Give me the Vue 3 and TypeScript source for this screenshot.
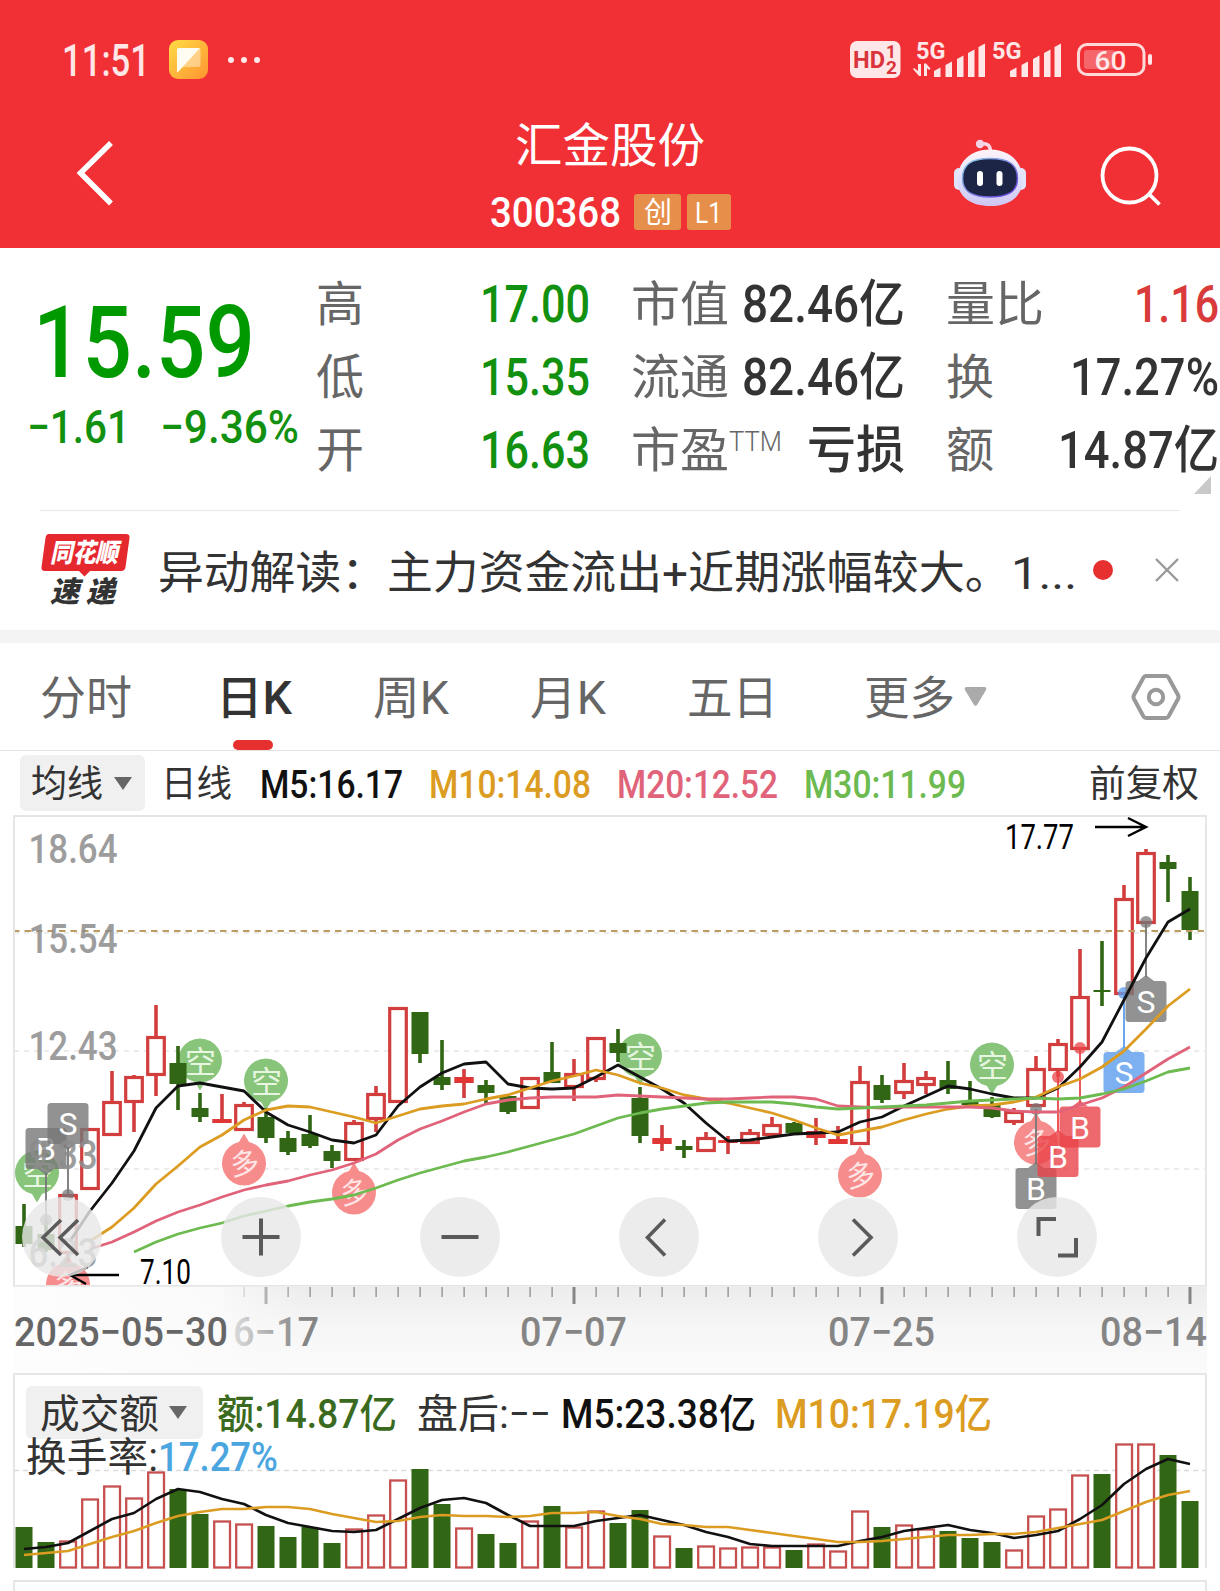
<script setup lang="ts">
import type { Directive } from 'vue'

/* Condenses an inline-block to a given layout width, like a DIN-style face. */
const vFit: Directive<HTMLElement, number> = {
  mounted(el, { value }) {
    const natural = el.getBoundingClientRect().width
    el.style.transform = `scaleX(${value / natural})`
    el.style.marginRight = `${value - natural}px`
  },
}

interface Stat { label: string; lw: number; value: string; vw: number; tone: string; sup?: string }
const columns: Stat[][] = [
  [
    { label: '高', lw: 48, value: '17.00', vw: 110, tone: 'down' },
    { label: '低', lw: 48, value: '15.35', vw: 110, tone: 'down' },
    { label: '开', lw: 48, value: '16.63', vw: 110, tone: 'down' },
  ],
  [
    { label: '市值', lw: 98, value: '82.46亿', vw: 163, tone: 'dark' },
    { label: '流通', lw: 98, value: '82.46亿', vw: 163, tone: 'dark' },
    { label: '市盈', lw: 98, value: '亏损', vw: 98, tone: 'dark', sup: 'TTM' },
  ],
  [
    { label: '量比', lw: 98, value: '1.16', vw: 85, tone: 'up' },
    { label: '换', lw: 48, value: '17.27%', vw: 149, tone: 'dark' },
    { label: '额', lw: 48, value: '14.87亿', vw: 161, tone: 'dark' },
  ],
]

const X0 = 24
const STEP = 22
const cx = (i: number) => X0 + STEP * i

/* kind, high, body top, body bottom, low */
type Candle = ['r' | 'g' | 'f', number, number, number, number]
const candles: Candle[] = [
  ['g', 1204, 1226, 1244, 1247], ['g', 1220, 1234, 1250, 1252], ['r', 1194, 1194, 1253, 1262], ['r', 1128, 1128, 1189, 1189],
  ['r', 1071, 1101, 1135, 1135], ['r', 1075, 1076, 1102, 1132], ['r', 1005, 1036, 1075, 1096], ['g', 1046, 1063, 1084, 1110],
  ['g', 1093, 1108, 1117, 1122], ['f', 1094, 1119, 1123, 1123], ['r', 1102, 1104, 1130, 1131], ['g', 1108, 1117, 1138, 1143],
  ['g', 1131, 1138, 1152, 1155], ['g', 1115, 1134, 1146, 1148], ['g', 1145, 1151, 1161, 1168], ['r', 1120, 1122, 1160, 1160],
  ['r', 1086, 1093, 1119, 1132], ['r', 1007, 1007, 1102, 1102], ['g', 1012, 1012, 1054, 1063], ['g', 1040, 1077, 1085, 1090],
  ['f', 1069, 1077, 1083, 1098], ['g', 1080, 1085, 1093, 1104], ['g', 1096, 1096, 1112, 1114], ['r', 1077, 1077, 1108, 1109],
  ['g', 1042, 1072, 1083, 1083], ['r', 1059, 1073, 1087, 1101], ['r', 1037, 1037, 1079, 1082], ['g', 1029, 1043, 1053, 1062],
  ['g', 1087, 1098, 1136, 1143], ['f', 1125, 1138, 1144, 1151], ['g', 1140, 1146, 1150, 1158], ['r', 1132, 1137, 1151, 1152],
  ['f', 1136, 1140, 1143, 1154], ['r', 1129, 1132, 1143, 1143], ['r', 1117, 1124, 1135, 1137], ['g', 1122, 1123, 1133, 1133],
  ['f', 1118, 1131, 1138, 1145], ['f', 1126, 1139, 1144, 1144], ['r', 1066, 1081, 1144, 1144], ['g', 1075, 1085, 1100, 1103],
  ['r', 1063, 1080, 1093, 1099], ['r', 1071, 1077, 1085, 1094], ['g', 1061, 1080, 1089, 1094], ['g', 1081, 1102, 1105, 1105],
  ['g', 1097, 1105, 1117, 1118], ['r', 1108, 1111, 1122, 1125], ['r', 1056, 1068, 1106, 1106], ['r', 1039, 1043, 1070, 1077],
  ['r', 949, 996, 1049, 1049], ['g', 941, 990, 992, 1006], ['r', 885, 898, 994, 994], ['r', 849, 852, 923, 923],
  ['g', 855, 862, 869, 902], ['g', 877, 891, 930, 940],
]

const line = (start: number, ys: number[]) => ys.map((y, k) => `${cx(start + k)},${y}`).join(' ')

const ma5 = '70,1241 ' + line(3, [1211, 1183, 1151, 1108, 1086, 1083, 1087, 1091, 1112, 1125, 1132, 1140, 1143, 1135, 1106, 1087, 1073, 1064, 1062, 1084, 1088, 1089, 1088, 1077, 1065, 1077, 1089, 1103, 1123, 1141, 1140, 1137, 1134, 1133, 1132, 1122, 1117, 1106, 1096, 1086, 1089, 1094, 1098, 1098, 1088, 1067, 1042, 1000, 958, 922, 909])
const ma10 = line(3, [1241, 1227, 1208, 1184, 1166, 1147, 1135, 1120, 1110, 1106, 1107, 1112, 1117, 1123, 1116, 1109, 1106, 1104, 1099, 1095, 1088, 1081, 1076, 1070, 1075, 1083, 1088, 1095, 1099, 1103, 1108, 1113, 1120, 1128, 1135, 1131, 1127, 1120, 1114, 1109, 1106, 1105, 1102, 1097, 1087, 1079, 1067, 1051, 1029, 1006, 989])
const ma20 = line(3, [1249, 1242, 1232, 1221, 1212, 1205, 1197, 1190, 1185, 1181, 1175, 1170, 1163, 1154, 1140, 1129, 1121, 1112, 1104, 1100, 1098, 1097, 1097, 1097, 1095, 1096, 1097, 1098, 1099, 1099, 1098, 1097, 1097, 1099, 1106, 1107, 1108, 1107, 1107, 1107, 1107, 1108, 1111, 1112, 1112, 1105, 1098, 1087, 1073, 1059, 1047])
const ma30 = line(5, [1252, 1242, 1234, 1228, 1223, 1216, 1211, 1206, 1202, 1199, 1195, 1188, 1180, 1173, 1167, 1161, 1157, 1152, 1146, 1140, 1134, 1126, 1118, 1113, 1109, 1106, 1103, 1102, 1102, 1102, 1104, 1107, 1109, 1108, 1107, 1106, 1105, 1103, 1101, 1100, 1099, 1098, 1099, 1098, 1094, 1089, 1081, 1072, 1068])

const shorts = [[37, 1173], [200, 1061], [266, 1081], [640, 1056], [992, 1065]]
const longs = [[68, 1284], [244, 1163], [354, 1192], [860, 1175], [1036, 1142]]

/* centre x, box top, letter, colour, entry-dot y, whether the tip points up */
const trades = [
  { x: 46, y: 1128, t: 'B', c: '#777', dot: 1220, up: false },
  { x: 68, y: 1103, t: 'S', c: '#777', dot: 1195, up: false },
  { x: 1036, y: 1168, t: 'B', c: '#777', dot: 1109, up: true },
  { x: 1058, y: 1136, t: 'B', c: '#ea4448', dot: 1077, up: true },
  { x: 1080, y: 1106.5, t: 'B', c: '#ea4448', dot: 1048, up: true },
  { x: 1124, y: 1052, t: 'S', c: '#5b9cec', dot: 993, up: true },
  { x: 1146, y: 981, t: 'S', c: '#777', dot: 922, up: true },
]

const priceLabels = [
  { t: '18.64', y: 863, w: 89 }, { t: '15.54', y: 953, w: 89 }, { t: '12.43', y: 1060, w: 89 },
  { t: '9.33', y: 1169, w: 69 }, { t: '6.23', y: 1267, w: 69 },
]
const dates = [
  { x: 520, t: '07−07' }, { x: 828, t: '07−25' }, { x: 1100, t: '08−14' },
]
const ticks = Array.from({ length: 44 }, (_, k) => ({ x: 244 + STEP * k, big: (k - 1) % 14 === 0 }))

const volTops: [string, number][] = [
  ['g', 1527], ['g', 1542], ['r', 1541], ['r', 1499], ['r', 1486], ['r', 1498], ['r', 1472], ['g', 1489], ['g', 1514], ['r', 1521], ['r', 1524],
  ['g', 1526], ['g', 1537], ['g', 1527], ['g', 1543], ['r', 1529], ['r', 1515], ['r', 1480], ['g', 1469], ['g', 1504], ['r', 1528], ['g', 1534],
  ['g', 1543], ['r', 1521], ['g', 1506], ['r', 1527], ['r', 1511], ['g', 1523], ['g', 1510], ['r', 1536], ['g', 1548], ['r', 1546], ['r', 1548],
  ['r', 1547], ['r', 1547], ['g', 1550], ['r', 1544], ['r', 1551], ['r', 1511], ['g', 1527], ['r', 1525], ['r', 1529], ['g', 1531], ['g', 1538],
  ['g', 1542], ['r', 1550], ['r', 1516], ['r', 1509], ['r', 1475], ['g', 1474], ['r', 1444], ['r', 1444], ['g', 1455], ['g', 1501],
]
const vma5 = line(0, [1549, 1547, 1543, 1531, 1519, 1513, 1499, 1489, 1492, 1499, 1504, 1515, 1523, 1527, 1531, 1532, 1530, 1519, 1508, 1500, 1498, 1503, 1515, 1526, 1526, 1526, 1521, 1518, 1515, 1520, 1525, 1532, 1537, 1544, 1546, 1546, 1546, 1546, 1541, 1537, 1531, 1528, 1525, 1530, 1533, 1538, 1535, 1531, 1519, 1505, 1484, 1469, 1459, 1464])
const vma10 = line(0, [1555, 1553, 1551, 1544, 1537, 1531, 1523, 1516, 1512, 1509, 1509, 1507, 1507, 1509, 1514, 1518, 1522, 1521, 1517, 1515, 1516, 1516, 1517, 1516, 1513, 1513, 1512, 1516, 1519, 1524, 1525, 1527, 1527, 1530, 1533, 1536, 1539, 1542, 1542, 1541, 1539, 1537, 1535, 1535, 1534, 1534, 1532, 1528, 1524, 1520, 1511, 1502, 1495, 1491])

const signal = [[0, 68], [11.5, 62], [23, 56], [34, 50], [44.5, 44]]
</script>

<template>
  <div class="screen">
    <header>
      <div class="status">
        <span class="clock" v-fit="88">11:51</span>
        <svg class="app" width="39" height="39" viewBox="0 0 39 39">
          <defs>
            <linearGradient id="appbg" x1="0" y1="0" x2="1" y2="1"><stop offset="0" stop-color="#ffdc45" /><stop offset="1" stop-color="#ff9430" /></linearGradient>
          </defs>
          <rect width="39" height="39" rx="9" fill="url(#appbg)" />
          <rect x="8" y="8" width="23.5" height="19" rx="2" fill="#fff" opacity=".4" />
          <path d="M8 10q0-2 2-2h21L9.500 31.500Q8 33 8 31z" fill="#fffdf2" />
        </svg>
        <svg class="dots" width="34" height="8" viewBox="0 0 34 8" fill="#ffe9e9"><circle cx="4" cy="4" r="3" /><circle cx="17" cy="4" r="3" /><circle cx="30" cy="4" r="3" /></svg>
        <svg class="system" width="306" height="50" viewBox="848 35 306 50" font-family="Roboto" font-weight="700">
          <rect x="850" y="41" width="50.500" height="37" rx="7" fill="#ffe6e7" />
          <g fill="#d9343c">
            <text x="853" y="67.500" font-size="23" textLength="32" lengthAdjust="spacingAndGlyphs">HD</text>
            <text x="886" y="58" font-size="18" textLength="10" lengthAdjust="spacingAndGlyphs">1</text>
            <text x="886" y="73.500" font-size="18" textLength="11" lengthAdjust="spacingAndGlyphs">2</text>
          </g>
          <g fill="#ffe6e7">
            <text x="916" y="58.500" font-size="23" textLength="29.500" lengthAdjust="spacingAndGlyphs">5G</text>
            <text x="992" y="58.500" font-size="23" textLength="29.500" lengthAdjust="spacingAndGlyphs">5G</text>
            <path d="M918 64h3v12h-2l-6-7 1-1 4 3zM924 76h3v-8l2 2 1.500-1.500L926 63.500h-2z" />
            <template v-for="ox in [934, 1010]" :key="ox">
              <path v-for="s in signal" :key="s[0]" :d="`M${ox + s[0]} 77V${s[1] + 3}l6.500-3.500V77z`" />
            </template>
            <rect x="1148" y="54" width="4" height="11" rx="2" />
            <rect x="1084" y="50" width="31" height="19" rx="3" opacity=".3" />
            <text x="1094.500" y="69.500" font-size="26" font-weight="500" textLength="32" lengthAdjust="spacingAndGlyphs">60</text>
          </g>
          <rect x="1078.500" y="44.500" width="65.500" height="30" rx="8.500" fill="none" stroke="#ffd9da" stroke-width="3" />
        </svg>
      </div>
      <div class="nav">
        <svg class="back" width="40" height="68" viewBox="74 139 40 68" fill="none" stroke="#fff" stroke-width="5.500"><path d="M111 143L80.500 173l30.500 30.500" /></svg>
        <div class="title">
          <div class="name"><span v-fit="190">汇金股份</span></div>
          <div class="code"><span class="num" v-fit="131">300368</span><b class="b1"><span v-fit="28">创</span></b><b class="b2"><span v-fit="27">L1</span></b></div>
        </div>
        <svg class="robot" width="76" height="70" viewBox="952 138 76 70">
          <defs>
            <linearGradient id="shell" x1="0" y1="0" x2="0" y2="1"><stop offset="0" stop-color="#fff3f8" /><stop offset=".5" stop-color="#dfe2ff" /><stop offset="1" stop-color="#cfc6f2" /></linearGradient>
            <linearGradient id="rim" x1="0" y1="0" x2="1" y2="1"><stop offset="0" stop-color="#8fd0e8" /><stop offset="1" stop-color="#6a3be0" /></linearGradient>
          </defs>
          <path d="M980 144q10-2 10.500 7" fill="none" stroke="#ffd6e2" stroke-width="3.500" />
          <circle cx="980" cy="144" r="4.200" fill="#f3d3e6" />
          <rect x="954" y="168" width="10" height="22" rx="5" fill="#e2e4fa" /><rect x="1016" y="168" width="10" height="22" rx="5" fill="#e2e4fa" />
          <path d="M990 149.500c20 0 32.500 13 32.500 30 0 18-14 26.500-32.500 26.500s-32.500-8.500-32.500-26.500c0-17 12.500-30 32.500-30z" fill="url(#shell)" />
          <path d="M990 158.500c19 0 27.500 6 27.500 20 0 13-9 18.500-27.500 18.500s-27.500-5.500-27.500-18.500c0-14 8.500-20 27.500-20z" fill="#1d2547" stroke="url(#rim)" stroke-width="1.500" />
          <rect x="977" y="171" width="6" height="15" rx="3" fill="#fff" /><rect x="996.500" y="171" width="6" height="15" rx="3" fill="#fff" />
        </svg>
        <svg class="search" width="64" height="64" viewBox="1099 143 64 64" fill="none" stroke="#fff" stroke-width="3.800"><circle cx="1129.500" cy="174.500" r="27" /><path d="M1148.500 192.500l11 11" /></svg>
      </div>
    </header>

    <section class="quote">
      <div class="price">
        <div class="last"><span v-fit="222">15.59</span></div>
        <div class="chg"><span v-fit="103">−1.61</span><span v-fit="139">−9.36%</span></div>
      </div>
      <div v-for="(col, c) in columns" :key="c" class="col">
        <div v-for="s in col" :key="s.label" class="stat">
          <span class="lab" v-fit="s.lw">{{ s.label }}</span>
          <sup v-if="s.sup" v-fit="53">{{ s.sup }}</sup>
          <span class="val" :class="s.tone" v-fit="s.vw">{{ s.value }}</span>
        </div>
      </div>
      <svg class="corner" width="17" height="18" viewBox="0 0 17 18"><path d="M17 0v18H0z" fill="#c9c9c9" /></svg>
    </section>

    <section class="news">
      <div class="logo">
        <svg width="90" height="44" viewBox="0 0 90 44"><path d="M8 0h77q4 0 3.500 4l-4 29q-.5 4-4.500 4H49l-5.500 5.500L38 37H4q-4 0-3.500-4l4-29Q5 0 8 0z" fill="#e5282e" /></svg>
        <strong class="l1"><span v-fit="68">同花顺</span></strong>
        <strong class="l2"><span v-fit="65">速 递</span></strong>
      </div>
      <p><span v-fit="229">异动解读：</span><span v-fit="275">主力资金流出</span><span v-fit="26">+</span><span v-fit="323">近期涨幅较大。</span><span v-fit="66">1...</span></p>
      <em></em>
      <svg class="close" width="26" height="26" viewBox="0 0 26 26" fill="none" stroke="#999" stroke-width="2.400"><path d="M2 2l22 22M24 2L2 24" /></svg>
    </section>

    <nav class="tabs">
      <a class="t1"><span v-fit="92">分时</span></a>
      <a class="t2 on"><span v-fit="76">日K</span></a>
      <a class="t3"><span v-fit="76">周K</span></a>
      <a class="t4"><span v-fit="76">月K</span></a>
      <a class="t5"><span v-fit="91">五日</span></a>
      <a class="t6"><span v-fit="91">更多</span><svg class="more" width="23" height="19" viewBox="0 0 23 19"><path d="M2 0h19q2 1 1 3l-9 15q-1.500 1.500-3 0L1 3Q0 1 2 0z" fill="#aaa" /></svg></a>
      <svg class="hex" width="50" height="50" viewBox="0 0 50 50" fill="none" stroke="#999" stroke-width="4"><path d="M15 4h20q1.500 0 2.500 1.500l9.500 17.500q1 2 0 4L37.500 44.500q-1 1.500-2.500 1.500H15q-1.500 0-2.500-1.500L3 27q-1-2 0-4l9.500-17.500Q13.500 4 15 4z" /><circle cx="25" cy="25" r="7.200" /></svg>
    </nav>

    <div class="legend">
      <div class="pill p1"><span v-fit="72">均线</span><svg width="18" height="13" viewBox="0 0 18 13"><path d="M0 0h18L9 13z" fill="#666" /></svg></div>
      <span class="k0" v-fit="71">日线</span>
      <span class="num k1" v-fit="143">M5:16.17</span>
      <span class="num k2" v-fit="162">M10:14.08</span>
      <span class="num k3" v-fit="161">M20:12.52</span>
      <span class="num k4" v-fit="162">M30:11.99</span>
      <span class="k5" v-fit="110">前复权</span>
    </div>

    <svg class="chart" width="1220" height="558" viewBox="0 815 1220 558">
      <defs>
        <linearGradient id="axis" x1="0" y1="0" x2="0" y2="1"><stop offset="0" stop-color="#ececec" /><stop offset=".45" stop-color="#f6f6f6" /><stop offset="1" stop-color="#fbfbfb" /></linearGradient>
        <linearGradient id="veil" x1="0" y1="0" x2="1" y2="0"><stop offset="0" stop-color="#fdfdfd" /><stop offset=".7" stop-color="#fbfbfb" stop-opacity=".9" /><stop offset="1" stop-color="#f8f8f8" stop-opacity="0" /></linearGradient>
        <clipPath id="plot"><rect x="14" y="816" width="1192" height="471" /></clipPath>
      </defs>
      <path d="M14 1051H1206M14 1169H1206M14 933H1206" fill="none" stroke="#e6e6e6" stroke-dasharray="5 5" stroke-width="1.500" />
      <g clip-path="url(#plot)">
        <g v-for="(s, k) in shorts" :key="'s' + k" :transform="`translate(${s[0]} ${s[1]})`">
          <path d="M0 29.500L-5 21A22 22 0 1 1 5 21z" fill="#89c47b" />
          <text x="-15" y="12" class="cjk" font-size="31" fill="#e6f6e0" textLength="30">空</text>
        </g>
        <g v-for="(s, k) in longs" :key="'l' + k" :transform="`translate(${s[0]} ${s[1]})`">
          <path d="M0-29.500L-5-21A22 22 0 1 0 5-21z" fill="#f68c8c" />
          <text x="-14" y="11" class="cjk" font-size="29" fill="#ffe6e6" textLength="28" transform="rotate(-8)">多</text>
        </g>
        <g v-for="(c, i) in candles" :key="i" :stroke="c[0] === 'g' ? '#306614' : '#d23e3e'" stroke-width="3.600" fill="none">
          <path :d="`M${cx(i)} ${c[1]}V${c[2]}M${cx(i)} ${c[3]}V${c[4]}`" />
          <rect v-if="c[0] === 'r'" :x="cx(i) - 8.300" :y="c[2] + 1.500" width="16.600" :height="c[3] - c[2] - 2" stroke-width="3.200" fill="#fff" />
          <rect v-else :x="cx(i) - (c[0] === 'f' ? 9.700 : 8.500)" :y="c[2]" :width="c[0] === 'f' ? 19.400 : 17" :height="c[3] - c[2]" :fill="c[0] === 'g' ? '#306614' : '#e03636'" stroke="none" />
        </g>
      </g>
      <path d="M13 931H1207" stroke="#bd9c62" stroke-width="1.800" stroke-dasharray="6.500 5" />
      <g v-for="(t, k) in trades" :key="'t' + k">
        <circle :cx="t.x" :cy="t.dot" r="6" :fill="t.c" opacity=".75" />
        <path :d="`M${t.x} ${t.dot}V${t.up ? t.y - 4 : t.y + 44}`" :stroke="t.c" stroke-width="1.800" />
        <path :d="t.up ? `M${t.x - 8} ${t.y}l8-6 8 6z` : `M${t.x - 8} ${t.y + 41}l8 6 8-6z`" :fill="t.c" opacity=".8" />
        <rect :x="t.x - 20.500" :y="t.y" width="41" height="41" rx="3.500" :fill="t.c" opacity=".8" />
        <text :x="t.x" :y="t.y + 32" text-anchor="middle" class="tl">{{ t.t }}</text>
      </g>
      <g fill="none" stroke-width="2.800" stroke-linejoin="round">
        <polyline :points="ma5" stroke="#111" /><polyline :points="ma10" stroke="#dc9c22" />
        <polyline :points="ma20" stroke="#e0637a" /><polyline :points="ma30" stroke="#6cba50" />
      </g>
      <text v-for="p in priceLabels" :key="p.t" x="28.500" :y="p.y" class="pl" :textLength="p.w" lengthAdjust="spacingAndGlyphs">{{ p.t }}</text>

      <text x="140" y="1284" class="ext" textLength="51" lengthAdjust="spacingAndGlyphs">7.10</text>
      <text x="1005" y="849" class="ext" textLength="69" lengthAdjust="spacingAndGlyphs">17.77</text>
      <g fill="none" stroke="#000" stroke-width="2.400"><path d="M119 1275H70M86 1284L70 1275l18-8" /><path d="M1095 827h51M1128 818l18 9-18 9" /></g>

      <circle v-for="k in 6" :key="'c' + k" :cx="62 + 199 * (k - 1)" cy="1237" r="40" fill="#e8e8e8" opacity=".82" />
      <g fill="none" stroke="#5a5a5a" stroke-width="4">
        <path d="M61 1220L43 1237.500l18 17.500M78 1220L60 1237.500l18 17.500" stroke-width="3.500" />
        <path d="M242.500 1237H279.500M261 1218.500V1255.500M441.500 1237H478.500" />
        <path d="M665 1219.500L647.500 1237.500 665 1255.500M853 1219.500L871 1237.500 853 1255.500" stroke-width="3.600" />
        <path d="M1038.500 1236V1219H1056M1058 1255.500H1076V1238" />
      </g>

      <path d="M14 1286V816H1206V1286z" fill="none" stroke="#e6e6e6" stroke-width="2" />
      <rect y="1286" x="14" width="1193" height="87" fill="url(#axis)" />
      <rect v-for="t in ticks" :key="t.x" :x="t.big ? t.x - 1.500 : t.x - .5" y="1287" :width="t.big ? 3 : 1.200" :height="t.big ? 17 : 10" fill="#858585" />
      <text x="233" y="1345.500" class="date" textLength="86" lengthAdjust="spacingAndGlyphs">6−17</text>
      <rect y="1287" x="14" width="290" height="86" fill="url(#veil)" />
      <text x="14" y="1345.500" class="date first" textLength="214" lengthAdjust="spacingAndGlyphs">2025−05−30</text>
      <text v-for="d in dates" :key="d.x" :x="d.x" y="1345.500" class="date" textLength="107" lengthAdjust="spacingAndGlyphs">{{ d.t }}</text>
    </svg>

    <section class="volume">
      <svg class="bars" width="1220" height="218" viewBox="0 1373 1220 218">
        <path d="M14 1568V1374H1206V1568M14 1591V1581H1206V1591" fill="none" stroke="#e6e6e6" stroke-width="2" />
        <path d="M14 1470.500H1206" stroke="#dcdcdc" stroke-width="1.300" stroke-dasharray="5 4" />
        <template v-for="(v, i) in volTops" :key="i">
          <rect v-if="v[0] === 'g'" :x="cx(i) - 8.500" :y="v[1]" width="17" :height="1568 - v[1]" fill="#306614" />
          <rect v-else :x="cx(i) - 7.800" :y="v[1] + .5" width="15.800" :height="1567 - v[1]" fill="#fff" stroke="#c65050" stroke-width="2.300" />
        </template>
        <g fill="none" stroke-width="2.600" stroke-linejoin="round"><polyline :points="vma5" stroke="#111" /><polyline :points="vma10" stroke="#dc9c22" /></g>
      </svg>
      <div class="vrow">
        <div class="pill p2"><span v-fit="119">成交额</span><svg width="18" height="13" viewBox="0 0 18 13"><path d="M0 0h18L9 13z" fill="#666" /></svg></div>
        <span class="v1" v-fit="180">额:14.87亿</span>
        <span v-fit="92" class="v2">盘后:</span><span v-fit="42">−−</span>
        <span class="v3" v-fit="195">M5:23.38亿</span>
        <span class="v4" v-fit="217">M10:17.19亿</span>
      </div>
      <div class="vrow2"><span v-fit="132">换手率:</span><span class="rate" v-fit="120">17.27%</span></div>
    </section>
  </div>
</template>

<style>
body { margin: 0; background: #fff; }
</style>

<style scoped>
.screen {
  width: 1220px; height: 1591px; overflow: hidden; background: #fff; color: #333;
  font-family: Roboto, "Noto Sans CJK SC", sans-serif; white-space: nowrap;
}
span, sup { display: inline-block; transform-origin: 0 50%; flex: none; }
svg { display: block; flex: none; }

header { height: 248px; background: #f13036; color: #fff; }
.status { height: 119px; display: flex; align-items: center; padding-left: 62px; }
.clock { font-size: 44px; line-height: 50px; color: #ffe6e7; font-weight: 500; position: relative; top: 1px; }
.app { margin-left: 19px; }
.dots { margin-left: 19px; }
.system { margin-left: auto; margin-right: 66px; }
.nav { height: 129px; display: flex; position: relative; justify-content: center; }
.back { position: absolute; left: 74px; top: 20px; }
.robot { position: absolute; left: 952px; top: 19px; }
.search { position: absolute; left: 1099px; top: 25px; }
.title { display: flex; flex-direction: column; align-items: center; width: 260px; }
.name { font-size: 47px; line-height: 54px; height: 66px; }
.name span { margin-left: -1px; }
.code { display: flex; align-items: center; width: 242px; height: 54px; }
.num { font-weight: 500; }
.code .num { font-size: 42px; line-height: 50px; position: relative; top: 1px; left: 1px; }
.code b { font-weight: 400; background: #e68f4b; border-radius: 3px; height: 36px; line-height: 39px; box-sizing: border-box; font-size: 29px; }
.b1 { width: 47px; padding-left: 10px; margin-left: 14px; }
.b2 { width: 44px; padding-left: 8px; margin-left: 6px; }

.quote { height: 262px; display: flex; position: relative; }
.quote::after { content: ""; position: absolute; left: 40px; right: 40px; bottom: -1px; height: 1px; background: #e8e8e8; }
.price { width: 316px; color: #009900; font-weight: 500; }
.last { font-size: 101px; line-height: 110px; padding: 40px 0 0 33px; height: 110px; }
.chg { font-size: 46px; line-height: 50px; padding: 4px 0 0 27px; display: flex; gap: 30px; color: #12900f; }
.col { width: 274px; padding-top: 20px; margin-right: 41px; }
.col:nth-of-type(4) { margin-right: 0; width: 273px; }
.stat { height: 73px; display: flex; align-items: center; line-height: 73px; }
.lab { font-size: 48px; color: #666; }
sup { font-size: 27px; line-height: 30px; color: #666; margin-top: -18px; vertical-align: baseline; font-weight: 300; }
.val { font-size: 51px; font-weight: 500; margin-left: auto; }
.down { color: #12900f; }
.up { color: #d93a3a; }
.dark { color: #333; }
.corner { position: absolute; left: 1194px; top: 228px; }

.news { height: 120px; display: flex; align-items: center; border-bottom: 13px solid #f4f4f4; position: relative; }
.logo { width: 90px; height: 76px; margin-left: 41px; margin-top: 4px; position: relative; font-style: italic; }
.logo strong { position: absolute; font-weight: 900; font-family: "Noto Sans CJK SC", sans-serif; }
.l1 { left: 9px; top: 0; color: #fff; font-size: 26px; line-height: 34px; }
.l2 { left: 9px; top: 38px; color: #333; font-size: 29px; line-height: 34px; }
.news p { margin: 7px 0 0 27px; font-size: 45px; line-height: 60px; display: flex; }
.news em { width: 20px; height: 20px; border-radius: 50%; background: #e6302f; position: absolute; left: 1093px; top: 50px; }
.close { position: absolute; left: 1154px; top: 47px; }

.tabs { height: 107px; border-bottom: 1px solid #e3e3e3; display: flex; align-items: center; font-size: 46px; line-height: 62px; color: #666; position: relative; }
.tabs a { display: flex; align-items: center; height: 107px; position: relative; }
.tabs a span { position: relative; top: 1px; }
.t1 { margin-left: 40px; }
.t2 { margin-left: 84px; }
.t3 { margin-left: 81px; }
.t4 { margin-left: 81px; }
.t5 { margin-left: 81px; }
.t6 { margin-left: 86px; }
.on { color: #333; font-weight: 500; }
.on::after { content: ""; position: absolute; left: 17px; bottom: 0; width: 40px; height: 10px; border-radius: 5px; background: #e6302f; }
.more { margin-left: 9px; }
.hex { position: absolute; left: 1131px; top: 29px; }

.legend { height: 64px; display: flex; align-items: center; font-size: 37px; line-height: 50px; }
.legend > span, .p1 > span { position: relative; top: 2px; }
.pill { display: flex; align-items: center; background: #f0f0f0; border-radius: 6px; box-sizing: border-box; }
.p1 { width: 125px; height: 56px; margin-left: 20px; padding-left: 11px; gap: 11px; }
.legend .num { font-size: 39px; }
.k0 { margin-left: 16px; }
.k1 { color: #111; margin-left: 28px; }
.k2 { color: #dc9c22; margin-left: 26px; }
.k3 { color: #e0637a; margin-left: 26px; }
.k4 { color: #6cba50; margin-left: 26px; }
.k5 { margin-left: 123px; }

.cjk { font-family: "Noto Sans CJK SC", sans-serif; }
.tl { font-size: 32px; fill: #fff; font-family: Roboto, sans-serif; }
.pl { font-size: 40px; font-weight: 500; fill: #8c8c8c; opacity: .85; font-family: Roboto, sans-serif; }
.ext { font-size: 35px; fill: #000; font-family: Roboto, sans-serif; }
.date { font-size: 40px; font-weight: 500; fill: #858585; font-family: Roboto, sans-serif; }
.date.first { fill: #666; }

.volume { position: relative; height: 218px; }
.bars { position: absolute; left: 0; top: 0; }
.vrow, .vrow2 { position: relative; display: flex; align-items: center; font-size: 40px; }
.vrow { height: 53px; padding: 13px 0 0 26px; line-height: 53px; }
.vrow span, .vrow2 span { position: relative; top: 1.5px; }
.p2 { width: 177px; height: 53px; padding-left: 14px; gap: 10px; }
.v1 { color: #3a6a20; font-weight: 500; margin-left: 14px; }
.v2 { margin-left: 20px; }
.v3 { color: #111; font-weight: 500; margin-left: 10px; }
.v4 { color: #dc9c22; font-weight: 500; margin-left: 19px; }
.vrow2 { height: 34px; line-height: 34px; padding-left: 26px; }
.rate { color: #4ba6e0; font-weight: 500; }
</style>
